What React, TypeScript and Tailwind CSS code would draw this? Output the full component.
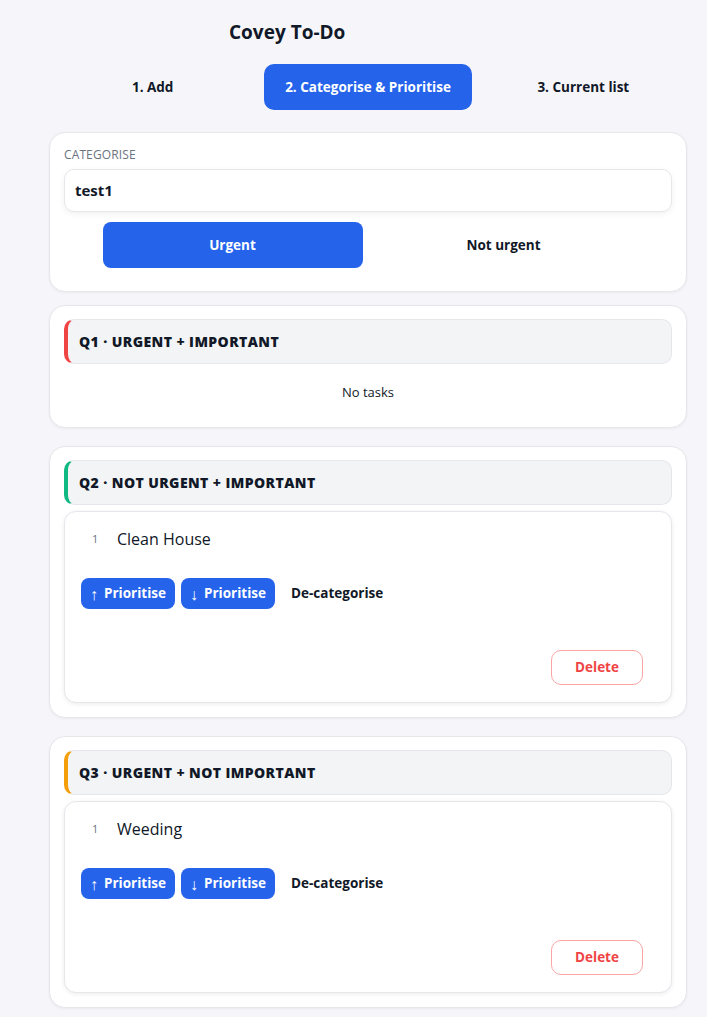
import React from 'react';

interface Quadrant {
  id: string;
  title: string;
  accent: string;
  tasks: string[];
}

const quadrants: Quadrant[] = [
  { id: 'q1', title: 'Q1 · Urgent + Important', accent: 'border-l-[#ef4444]', tasks: [] },
  { id: 'q2', title: 'Q2 · Not urgent + Important', accent: 'border-l-[#10b981]', tasks: ['Clean House'] },
  { id: 'q3', title: 'Q3 · Urgent + Not important', accent: 'border-l-[#f59e0b]', tasks: ['Weeding'] },
];

function TaskCard({ index, name }: { index: number; name: string }) {
  return (
    <div className="mt-[6px] rounded-xl border border-[#e5e7eb] bg-white px-4 pt-[15px] pb-[17px] shadow-[0_1px_4px_rgba(0,0,0,0.08)]">
      <div className="flex items-center pl-[11px]">
        <span className="w-[25px] text-[11px] text-[#6b7280]">{index}</span>
        <span className="text-[16px] leading-6 text-[#111827]">{name}</span>
      </div>
      <div className="mt-[27px] flex items-center gap-[6px]">
        <button className="flex h-[31px] items-center gap-[6px] rounded-lg bg-[#2563eb] px-[9px] text-[13.5px] font-bold text-white">
          <span className="text-[16px] font-normal">↑</span>Prioritise
        </button>
        <button className="flex h-[31px] items-center gap-[6px] rounded-lg bg-[#2563eb] px-[9px] text-[13.5px] font-bold text-white">
          <span className="text-[16px] font-normal">↓</span>Prioritise
        </button>
        <button className="h-[31px] px-[10px] text-[13.5px] font-bold text-[#111827]">De-categorise</button>
      </div>
      <div className="mt-[41px] flex justify-end pr-[12px]">
        <button className="h-[35px] w-[92px] rounded-[10px] border border-[#fca5a5] bg-white text-[13.5px] font-bold text-[#ef4444]">Delete</button>
      </div>
    </div>
  );
}

export default function App() {
  return (
    <div className="min-h-screen bg-[#f6f6fa] pb-[12px] font-['Open_Sans','Noto_Sans',sans-serif] text-[#111827]">
      <div className="ml-[49px] w-[638px] pt-[18px]">
        <h1 className="ml-[180px] text-[19px] font-bold leading-7">Covey To-Do</h1>

        <div className="mt-[18px] grid grid-cols-3 gap-2">
          <button className="h-[46px] rounded-[10px] text-[13.5px] font-bold">1. Add</button>
          <button className="h-[46px] rounded-[10px] bg-[#2563eb] text-[13.5px] font-bold text-white">2. Categorise &amp; Prioritise</button>
          <button className="h-[46px] rounded-[10px] text-[13.5px] font-bold">3. Current list</button>
        </div>

        <section className="mt-[22px] rounded-2xl border border-[#e5e7eb] bg-white px-[14px] pt-[14px] pb-[23px] shadow-[0_1px_3px_rgba(0,0,0,0.05)]">
          <div className="text-[12px] leading-4 tracking-[0.01em] text-[#6b7280] uppercase">Categorise</div>
          <div className="mt-[6px] flex h-[43px] items-center rounded-[10px] border border-[#e5e7eb] bg-white px-[10px] text-[15px] font-bold shadow-[0_2px_6px_rgba(0,0,0,0.06)]">
            test1
          </div>
          <div className="mx-auto mt-[10px] grid w-[531px] grid-cols-2 gap-[11px]">
            <button className="h-[46px] rounded-lg bg-[#2563eb] text-[13.5px] font-bold text-white">Urgent</button>
            <button className="h-[46px] rounded-lg text-[13.5px] font-bold">Not urgent</button>
          </div>
        </section>

        {quadrants.map((q, i) => (
          <section
            key={q.id}
            className={`${i === 0 ? 'mt-[13px]' : 'mt-[18px]'} rounded-2xl border border-[#e5e7eb] bg-white px-[14px] pt-[13px] pb-[14px] shadow-[0_1px_3px_rgba(0,0,0,0.05)]`}
          >
            <div className={`flex h-[45px] items-center rounded-[10px] border border-[#e5e7eb] border-l-4 ${q.accent} bg-[#f3f4f6] pl-[11px] text-[14px] font-extrabold tracking-[0.03em] uppercase`}>
              {q.title}
            </div>
            {q.tasks.length === 0 ? (
              <div className="pt-[19px] pb-[12px] text-center text-[13px] leading-[18px]">No tasks</div>
            ) : (
              q.tasks.map((t, idx) => <TaskCard key={t} index={idx + 1} name={t} />)
            )}
          </section>
        ))}
      </div>
    </div>
  );
}
